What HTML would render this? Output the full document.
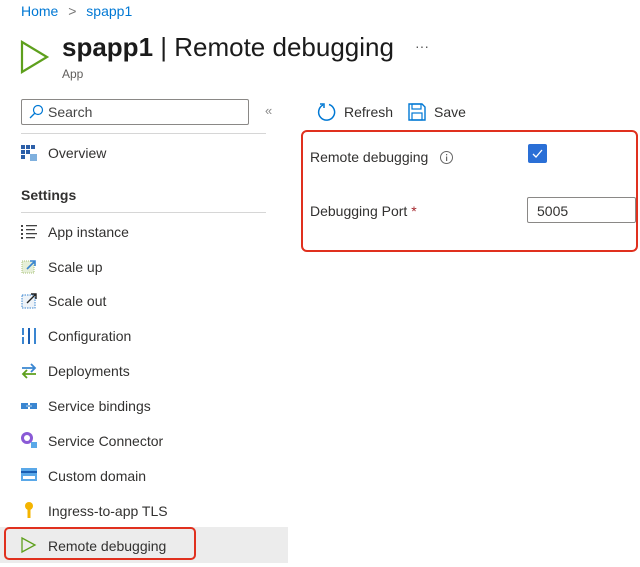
<!DOCTYPE html>
<html><head><meta charset="utf-8"><style>
*{margin:0;padding:0;box-sizing:border-box}
body{width:640px;height:567px;background:#fff;font-family:"Liberation Sans",sans-serif;color:#323130;position:relative;overflow:hidden}
.a{position:absolute;white-space:nowrap}
.it{position:absolute;left:48px;font-size:14px;line-height:16px}
.ic{position:absolute;left:20px;width:18px;height:18px}
</style></head><body>
<div class="a" style="left:21px;top:3px;font-size:14px;color:#0078d4">Home <span style="color:#777;margin:0 6px">&gt;</span> spapp1</div>
<svg class="a" style="left:20px;top:40px" width="30" height="34"><path d="M2 2 L27 17 L2 32 Z" fill="none" stroke="#5ea01d" stroke-width="2.2"/></svg>
<div class="a" style="left:62px;top:32px;font-size:26px;color:#1b1b1b;line-height:30px"><b>spapp1</b> | Remote debugging</div>
<div class="a" style="left:415px;top:38px;font-size:14px;color:#555">···</div>
<div class="a" style="left:62px;top:67px;font-size:12px;color:#605e5c">App</div>
<div class="a" style="left:21px;top:99px;width:228px;height:26px;border:1px solid #8a8886;border-radius:2px"></div>
<svg class="a" style="left:28px;top:104px" width="16" height="16"><circle cx="10" cy="6" r="4.5" fill="none" stroke="#0078d4" stroke-width="1.2"/><path d="M7 9 L2 14" stroke="#0078d4" stroke-width="1.3"/></svg>
<div class="a" style="left:48px;top:104px;font-size:14px;color:#444">Search</div>
<div class="a" style="left:265px;top:103px;font-size:13px;color:#888">«</div>
<div class="a" style="left:21px;top:133px;width:245px;height:1px;background:#d6d6d6"></div>
<svg class="ic" style="top:144px"><g fill="#2c5fa8"><rect x="1" y="1" width="4" height="4"/><rect x="6" y="1" width="4" height="4"/><rect x="11" y="1" width="4" height="4"/><rect x="1" y="6" width="4" height="4"/><rect x="6" y="6" width="4" height="4"/><rect x="1" y="11" width="4" height="4"/></g><rect x="10" y="10" width="7" height="7" fill="#7fb0de"/></svg>
<div class="it" style="top:145px">Overview</div>
<div class="a" style="left:21px;top:187px;font-size:14px;font-weight:bold;color:#323130">Settings</div>
<div class="a" style="left:21px;top:212px;width:245px;height:1px;background:#d6d6d6"></div>
<svg class="ic" style="top:223px"><g fill="#444"><rect x="1" y="2" width="2" height="2"/><rect x="1" y="6" width="2" height="2"/><rect x="1" y="10" width="2" height="2"/><rect x="1" y="14" width="2" height="2"/><rect x="6" y="2" width="11" height="1.3"/><rect x="6" y="6" width="9" height="1.3"/><rect x="6" y="10" width="11" height="1.3"/><rect x="6" y="14" width="9" height="1.3"/></g></svg>
<div class="it" style="top:224px">App instance</div>
<svg class="ic" style="top:258px"><rect x="2" y="3" width="12" height="12" fill="#e6efd8" stroke="#a8c07a" stroke-dasharray="1 1"/><path d="M7 11 L15 3 M10 3 H15 V8" stroke="#3a86d1" stroke-width="1.6" fill="none"/></svg>
<div class="it" style="top:259px">Scale up</div>
<svg class="ic" style="top:292px"><rect x="2" y="3" width="13" height="13" fill="#eef3f8" stroke="#3a86d1" stroke-dasharray="1.5 1"/><path d="M7 11 L16 2 M11 2 H16 V7" stroke="#222" stroke-width="1.4" fill="none"/></svg>
<div class="it" style="top:293px">Scale out</div>
<svg class="ic" style="top:327px"><rect x="2" y="1" width="2" height="16" fill="#3a86d1"/><rect x="8" y="1" width="2" height="16" fill="#1a5fb4"/><rect x="14" y="1" width="2" height="16" fill="#3a86d1"/><rect x="1" y="8" width="4" height="2" fill="#fff"/></svg>
<div class="it" style="top:328px">Configuration</div>
<svg class="ic" style="top:362px"><path d="M2 6 H15 M11 2 L15 6 L11 10" stroke="#3a86d1" stroke-width="1.8" fill="none"/><path d="M16 12 H3 M7 8 L3 12 L7 16" stroke="#5ea01d" stroke-width="1.8" fill="none"/></svg>
<div class="it" style="top:363px">Deployments</div>
<svg class="ic" style="top:397px"><rect x="1" y="6" width="7" height="6" fill="#3a86d1"/><rect x="10" y="6" width="7" height="6" fill="#3a86d1"/><rect x="6" y="8" width="6" height="2" fill="#7fb0de"/></svg>
<div class="it" style="top:398px">Service bindings</div>
<svg class="ic" style="top:431px"><circle cx="7" cy="7" r="6" fill="#8a5ad6"/><circle cx="7" cy="7" r="3" fill="#fff"/><rect x="11" y="11" width="6" height="6" fill="#5aa8e8"/></svg>
<div class="it" style="top:433px">Service Connector</div>
<svg class="ic" style="top:466px"><rect x="1" y="2" width="16" height="13" fill="#5aa8e8"/><rect x="1" y="5" width="16" height="2" fill="#1a5fb4"/><rect x="3" y="10" width="12" height="3" fill="#fff"/></svg>
<div class="it" style="top:468px">Custom domain</div>
<svg class="ic" style="top:501px"><circle cx="9" cy="5" r="4" fill="#f4b400"/><rect x="7.5" y="8" width="3" height="9" fill="#f4b400"/></svg>
<div class="it" style="top:503px">Ingress-to-app TLS</div>
<div class="a" style="left:0;top:527px;width:288px;height:36px;background:#ececec"></div>
<div class="a" style="left:4px;top:527px;width:192px;height:33px;border:2px solid #e0301e;border-radius:5px"></div>
<svg class="a" style="left:20px;top:536px" width="18" height="18"><path d="M2 2 L15 9 L2 16 Z" fill="none" stroke="#5ea01d" stroke-width="1.3"/></svg>
<div class="it" style="top:538px">Remote debugging</div>
<svg class="a" style="left:317px;top:102px" width="20" height="20"><path d="M6 3 A8 8 0 1 0 12 2.5" fill="none" stroke="#0078d4" stroke-width="1.5"/><path d="M3 2 H7 V6" fill="none" stroke="#0078d4" stroke-width="1.5"/></svg>
<div class="a" style="left:344px;top:104px;font-size:14px">Refresh</div>
<svg class="a" style="left:407px;top:102px" width="20" height="20"><path d="M2 2 H15 L18 5 V18 H2 Z" fill="none" stroke="#0078d4" stroke-width="1.4"/><rect x="5" y="2" width="9" height="5" fill="none" stroke="#0078d4" stroke-width="1.2"/><rect x="5" y="11" width="10" height="7" fill="none" stroke="#0078d4" stroke-width="1.2"/></svg>
<div class="a" style="left:434px;top:104px;font-size:14px">Save</div>
<div class="a" style="left:301px;top:130px;width:337px;height:122px;border:2px solid #e0301e;border-radius:6px"></div>
<div class="a" style="left:310px;top:149px;font-size:14px">Remote debugging</div>
<svg class="a" style="left:439px;top:150px" width="15" height="15"><circle cx="7.5" cy="7.5" r="6" fill="none" stroke="#666"/><rect x="7" y="6.5" width="1.2" height="4.5" fill="#666"/><rect x="7" y="4" width="1.2" height="1.3" fill="#666"/></svg>
<div class="a" style="left:528px;top:144px;width:19px;height:19px;background:#2a6fd6;border-radius:2px"></div>
<svg class="a" style="left:528px;top:144px" width="19" height="19"><path d="M5 10 L8 13 L14 6" fill="none" stroke="#fff" stroke-width="1.3"/></svg>
<div class="a" style="left:310px;top:203px;font-size:14px">Debugging Port <span style="color:#a4262c">*</span></div>
<div class="a" style="left:527px;top:197px;width:109px;height:26px;border:1px solid #8a8886;border-radius:2px"></div>
<div class="a" style="left:537px;top:203px;font-size:14px">5005</div>
</body></html>
